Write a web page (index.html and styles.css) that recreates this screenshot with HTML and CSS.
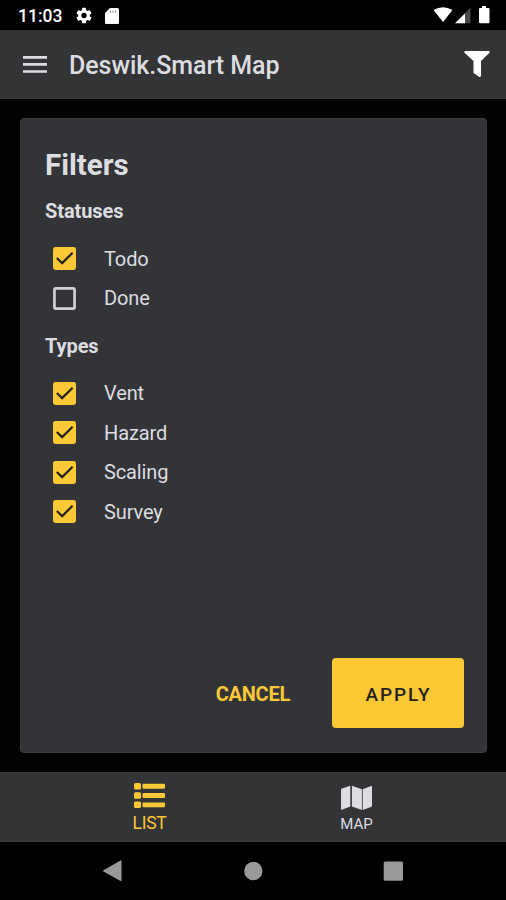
FILE: index.html
```html
<!DOCTYPE html>
<html lang="en">
<head>
<meta charset="utf-8">
<title>Deswik.Smart Map</title>
<link rel="stylesheet" href="styles.css">
</head>
<body>
<div class="screen">
  <div class="status">
    <span class="clock">11:03</span>
    <svg class="gear" width="16" height="17" viewBox="2 2 20 20"><path fill="#fff" d="M19.14 12.94c.04-.3.06-.61.06-.94s-.02-.64-.07-.94l2.03-1.58a.49.49 0 0 0 .12-.61l-1.92-3.32a.49.49 0 0 0-.59-.22l-2.39.96a7 7 0 0 0-1.62-.94l-.36-2.54A.48.48 0 0 0 13.92 2.400h-3.84a.48.48 0 0 0-.47.41l-.36 2.54c-.59.24-1.13.57-1.62.94l-2.39-.96a.48.48 0 0 0-.59.22L2.74 8.870a.48.48 0 0 0 .12.61l2.03 1.58c-.05.3-.09.63-.09.94s.02.64.07.94l-2.03 1.58a.49.49 0 0 0-.12.61l1.920 3.320c.12.22.37.29.59.22l2.390-.96c.5.38 1.030.7 1.620.94l.36 2.540c.05.24.24.41.48.41h3.840c.24 0 .44-.17.47-.41l.36-2.540c.59-.24 1.130-.56 1.620-.94l2.390.96c.22.08.47 0 .59-.22l1.920-3.320a.48.48 0 0 0-.12-.61zM12 15.300a3.300 3.300 0 1 1 0-6.600 3.300 3.300 0 0 1 0 6.600z"/></svg>
    <svg class="sdcard" width="14" height="16" viewBox="0 0 14 16"><path fill="#fff" d="M5 0h7.500Q14 0 14 1.500v13q0 1.500-1.500 1.500h-11Q0 16 0 14.500V5z"/><path stroke="#999" stroke-width="1" d="M5.500 2.500v2.500M8 2.500v2.500M10.500 2.500v2.500"/></svg>
    <svg class="signals" width="58" height="18" viewBox="0 0 58 18"><path fill="#fff" d="M.5 4Q10-1.500 19.500 4L10 16z"/><path fill="#484848" d="M37.500 1.500v15.800H22z"/><path fill="#fff" d="M32 7.500v9.800H22z"/><path fill="#fff" d="M49 0h4v2h2.500q1 0 1 1v13.300q0 1-1 1h-8.500q-1 0-1-1V3q0-1 1-1h2z"/></svg>
  </div>
  <header class="appbar">
    <svg width="24" height="18" viewBox="0 0 24 18"><path stroke="#dcdde1" stroke-width="2.700" d="M0 2.300h24M0 9.400h24M0 16.500h24"/></svg>
    <h1>Deswik.Smart Map</h1>
    <svg class="funnel" width="26" height="27" viewBox="0 0 26 27"><path fill="#fff" d="M1 0h24q1.200.5.500 1.800L17 10v15q-.8 1.500-2 .8l-5.500-3.800V10L.5 1.800Q-.2.500 1 0z"/></svg>
  </header>
  <main>
    <section class="card">
      <h2>Filters</h2>
      <h3>Statuses</h3>
      <div class="options">
        <div class="option"><svg class="box" viewBox="0 0 24 24"><rect width="24" height="24" rx="2.500"/><path d="M4 11.500l5.500 5.300L20.500 6"/></svg><span>Todo</span></div>
        <div class="option"><svg class="box off" viewBox="0 0 24 24"><rect x="1.500" y="1.500" width="21" height="21" rx="1.500"/></svg><span>Done</span></div>
      </div>
      <h3 class="types">Types</h3>
      <div class="options">
        <div class="option"><svg class="box" viewBox="0 0 24 24"><rect width="24" height="24" rx="2.500"/><path d="M4 11.500l5.500 5.300L20.500 6"/></svg><span>Vent</span></div>
        <div class="option"><svg class="box" viewBox="0 0 24 24"><rect width="24" height="24" rx="2.500"/><path d="M4 11.500l5.500 5.300L20.500 6"/></svg><span>Hazard</span></div>
        <div class="option"><svg class="box" viewBox="0 0 24 24"><rect width="24" height="24" rx="2.500"/><path d="M4 11.500l5.500 5.300L20.500 6"/></svg><span>Scaling</span></div>
        <div class="option"><svg class="box" viewBox="0 0 24 24"><rect width="24" height="24" rx="2.500"/><path d="M4 11.500l5.500 5.300L20.500 6"/></svg><span>Survey</span></div>
      </div>
      <div class="actions"><button class="cancel">CANCEL</button><button class="apply">APPLY</button></div>
    </section>
  </main>
  <nav class="tabs">
    <div class="tab active"><svg width="31" height="26" viewBox="0 0 31 26"><g fill="#fdc835"><rect width="7" height="6.500" rx="1.500"/><rect y="9.300" width="7" height="6.500" rx="1.500"/><rect y="18.600" width="7" height="6.500" rx="1.500"/><rect x="8.500" y=".8" width="22.500" height="4.900" rx="1"/><rect x="8.500" y="10.100" width="22.500" height="4.900" rx="1"/><rect x="8.500" y="19.400" width="22.500" height="4.900" rx="1"/></g></svg><span>LIST</span></div>
    <div class="tab"><svg width="31" height="26" viewBox="0 0 31 26"><path fill="#dcdde1" d="M0 5q0-1 1-1.400L9.300.7v20.800L1 24.700q-1 .2-1-.8zM10.900.7l10 3.500V25l-10-3.500zM21.700 4.200L30 1q1-.3 1 .7V20.500q0 1-1 1.500l-8.300 3z"/></svg><span>MAP</span></div>
  </nav>
  <div class="system">
    <svg width="20" height="22" viewBox="0 0 20 22"><path fill="#999" d="M17.500.5Q18.500 0 18.500 1v19.500q0 1-1 .5L.5 11.500Q-.5 11 .5 10.300z"/></svg>
    <svg width="20" height="20" viewBox="0 0 20 20"><circle cx="10.300" cy="10" r="9.200" fill="#999"/></svg>
    <svg width="20" height="20" viewBox="0 0 20 20"><rect x=".7" y=".5" width="19.300" height="19.300" rx="1.500" fill="#999"/></svg>
  </div>
</div>
</body>
</html>
```
FILE: styles.css
```css
* { box-sizing: border-box; }
body { margin: 0; background: #000; font-family: Roboto, "Liberation Sans", sans-serif; color: #dcdde1; }
svg { display: block; flex: none; }
h1, h2, h3 { margin: 0; white-space: nowrap; }
.screen { width: 506px; height: 900px; display: flex; flex-direction: column; overflow: hidden; }
.status { height: 30px; flex: none; display: flex; padding: 6px 14px 0 18px; color: #fff; }
.clock { width: 58px; font-size: 17.500px; line-height: 21px; font-weight: 500; }
.gear { margin: 1px 13px 0 0; }
.sdcard { margin-top: 2px; }
.signals { margin: 0 1px 0 auto; }
.appbar { height: 69px; flex: none; display: flex; align-items: center; padding: 0 16px 0 23px; background: #333436; border-bottom: 1px solid #3a3b3d; }
.appbar h1 { margin: 4px 0 0 22px; font-size: 25px; line-height: 30px; font-weight: 500; letter-spacing: -0.05px; }
.funnel { margin: 0 0 0 auto; }
main { flex: 1; padding: 19px 19px 19px 20px; background: #030303; }
.card { height: 635px; display: flex; flex-direction: column; padding: 29px 22px 24px 24px; background: #333437; border: 1px solid #3b3c3e; border-radius: 4px; }
h2 { font-size: 29.500px; line-height: 34px; font-weight: 700; }
h3 { margin-top: 17px; font-size: 20px; line-height: 24px; font-weight: 700; letter-spacing: -0.1px; }
.options { margin-top: 16px; padding-left: 8px; }
h3.types { margin-top: 16px; }
.option { height: 39.400px; display: flex; align-items: center; gap: 28px; font-size: 20px; line-height: 24px; letter-spacing: -0.12px; }
.box { width: 23px; height: 23px; }
.box rect { fill: #fdc835; }
.box path { fill: none; stroke: #25231f; stroke-width: 2.300; }
.off rect { fill: none; stroke: #d2d0d7; stroke-width: 2.800; }
.actions { margin-top: auto; display: flex; justify-content: flex-end; align-items: center; gap: 20px; }
button { height: 70px; border: 0; border-radius: 4px; font-family: inherit; font-size: 20px; font-weight: 500; }
.cancel { padding: 2px 22px 0; background: none; color: #fdc835; font-weight: 700; letter-spacing: -0.25px; }
.apply { width: 132px; padding: 2px 0 0 1px; background: #fdc835; color: #25231f; font-size: 19px; letter-spacing: 1.900px; }
.tabs { height: 70px; flex: none; display: flex; justify-content: center; background: #333436; border: solid #3a3b3d; border-width: 1px 0; }
.tab { width: 207px; display: flex; flex-direction: column; align-items: center; padding-top: 12px; font-size: 15px; line-height: 20px; }
.tab span { margin-top: 3px; }
.tab.active { padding-top: 10px; color: #fdc835; font-size: 17.500px; letter-spacing: -0.3px; }
.active span { margin-top: 4px; }
.system { height: 58px; flex: none; display: flex; justify-content: center; align-items: center; gap: 120px; }
```
